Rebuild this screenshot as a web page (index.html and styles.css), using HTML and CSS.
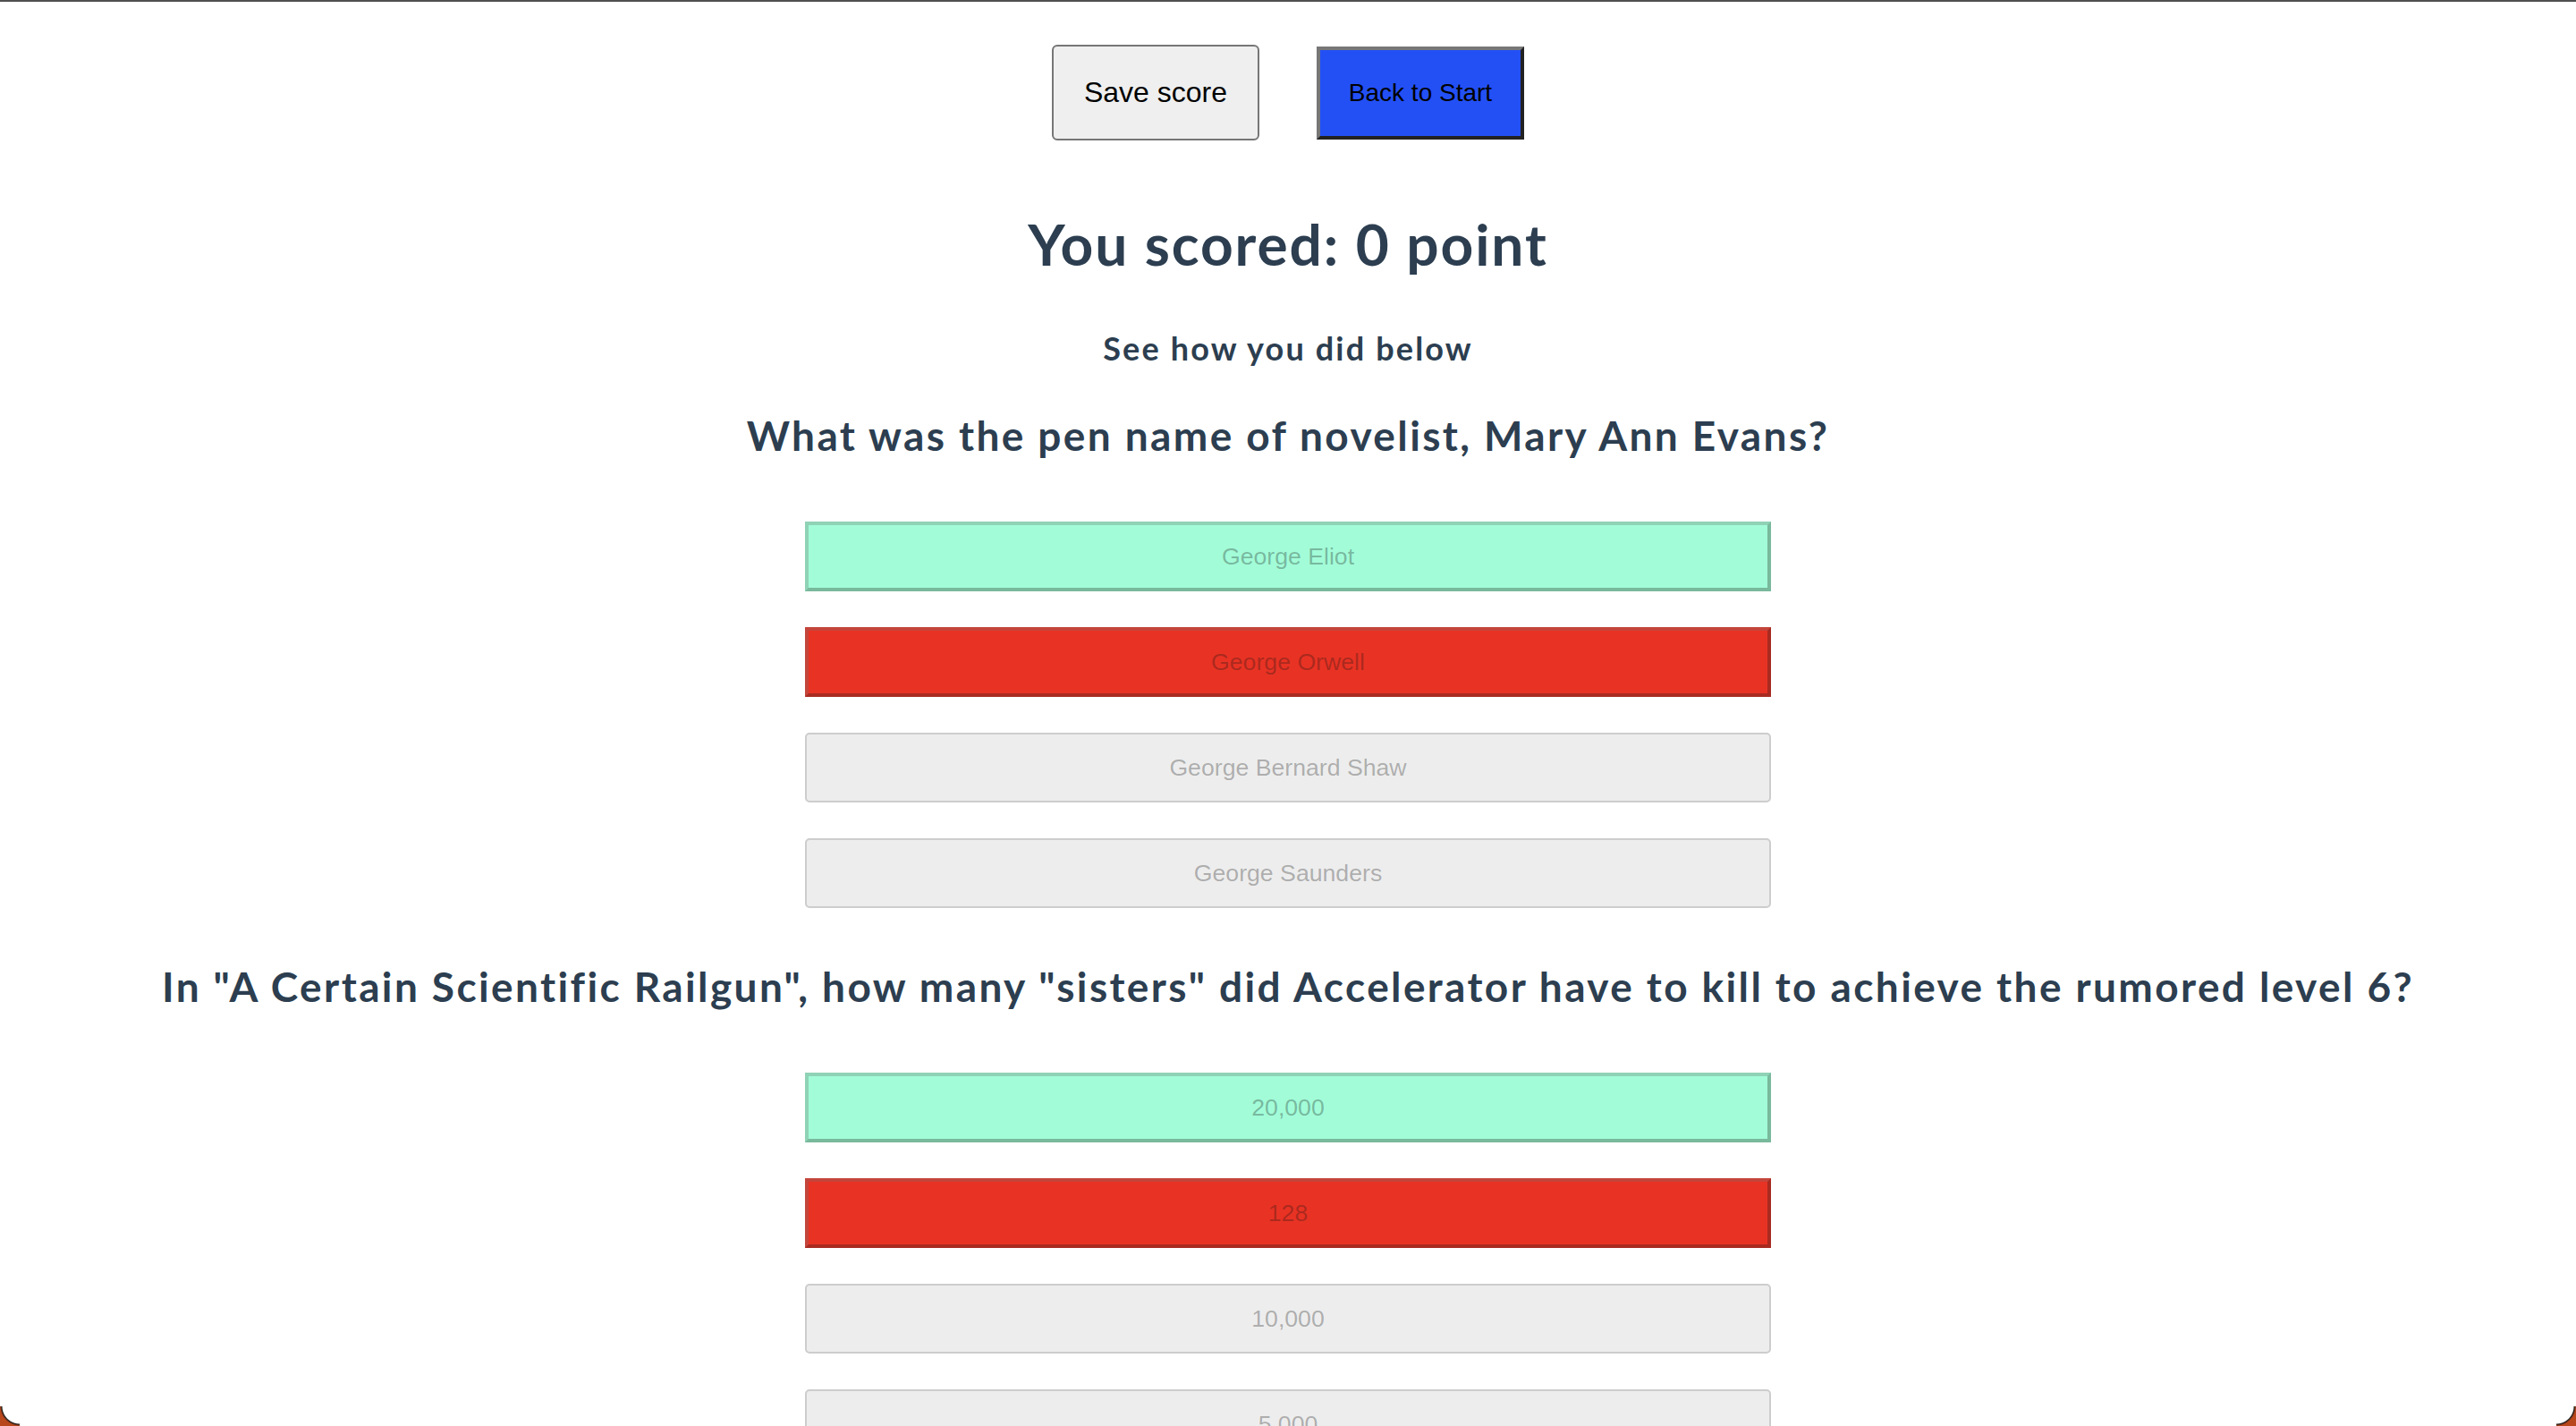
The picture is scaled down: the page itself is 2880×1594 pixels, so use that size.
FILE: index.html
```html
<!DOCTYPE html>
<html lang="en">
<head>
<meta charset="utf-8">
<title>Quiz results</title>
<link rel="stylesheet" href="styles.css">
</head>
<body>
<div class="window-line"></div>
<main class="app">
  <div class="actions">
    <button class="btn-save" type="button">Save score</button>
    <button class="btn-back" type="button">Back to Start</button>
  </div>
  <h1 class="score">You scored: 0 point</h1>
  <h3 class="subtitle">See how you did below</h3>

  <section class="question first">
    <h2 class="q-title">What was the pen name of novelist, Mary Ann Evans?</h2>
    <div class="answers">
      <button class="answer correct" disabled>George Eliot</button>
      <button class="answer wrong" disabled>George Orwell</button>
      <button class="answer" disabled>George Bernard Shaw</button>
      <button class="answer" disabled>George Saunders</button>
    </div>
  </section>

  <section class="question">
    <h2 class="q-title">In "A Certain Scientific Railgun", how many "sisters" did Accelerator have to kill to achieve the rumored level 6?</h2>
    <div class="answers">
      <button class="answer correct" disabled>20,000</button>
      <button class="answer wrong" disabled>128</button>
      <button class="answer" disabled>10,000</button>
      <button class="answer" disabled>5,000</button>
    </div>
  </section>
</main>
<div class="corner corner-left"></div>
<div class="corner corner-right"></div>
</body>
</html>
```

FILE: styles.css
```css
html, body {
  margin: 0;
  padding: 0;
  background: #ffffff;
}

.window-line {
  height: 2px;
  background: #4f4f4f;
}

.app {
  font-family: Lato, "Noto Sans", Helvetica, Arial, sans-serif;
  color: #2c3e50;
  text-align: center;
  display: flex;
  flex-direction: column;
  align-items: center;
  padding-bottom: 200px;
}

.actions {
  display: flex;
  align-items: center;
  gap: 64px;
  margin-top: 48px;
}

.btn-save {
  box-sizing: border-box;
  width: 232px;
  height: 107px;
  font-family: "Liberation Sans", Arial, sans-serif;
  font-size: 32px;
  color: #000;
  background: #efefef;
  border: 2px solid #767676;
  border-radius: 6px;
  padding: 0;
}

.btn-back {
  box-sizing: border-box;
  width: 232px;
  height: 104px;
  font-family: "Liberation Sans", Arial, sans-serif;
  font-size: 28px;
  color: #000;
  background: #2350f5;
  border-style: solid;
  border-width: 4px;
  border-color: #777777 #222222 #222222 #777777;
  padding: 0;
}

.score {
  font-size: 64px;
  line-height: 1.2;
  font-weight: 700;
  letter-spacing: 0.03em;
  margin: 78px 0 0;
}

.subtitle {
  font-size: 36px;
  line-height: 1.2;
  font-weight: 700;
  letter-spacing: 0.06em;
  margin: 56px 0 0;
}

.question {
  display: flex;
  flex-direction: column;
  align-items: center;
  margin-top: 60px;
}

.question.first {
  margin-top: 48px;
}

.q-title {
  font-size: 46px;
  line-height: 1.2;
  font-weight: 700;
  letter-spacing: 0.052em;
  margin: 0;
}

.answers {
  display: flex;
  flex-direction: column;
  gap: 40px;
  margin-top: 69px;
}

.answer {
  box-sizing: border-box;
  width: 1080px;
  height: 78px;
  font-family: "Liberation Sans", Arial, sans-serif;
  font-size: 26.67px;
  color: rgba(16, 16, 16, 0.3);
  background: #ededed;
  border: 2px solid #cdcdcd;
  border-radius: 5px;
  padding: 0;
}

.answer.correct {
  background: #a2fcd8;
  border: 4px solid;
  border-color: #8fd2b6 #79b99c #79b99c #8fd2b6;
  border-radius: 0;
}

.answer.wrong {
  background: #e83324;
  border: 4px solid;
  border-color: #c4453b #a82b21 #a82b21 #c4453b;
  border-radius: 0;
}

.corner {
  position: fixed;
  bottom: 0;
  width: 22px;
  height: 22px;
}

.corner-left {
  left: 0;
  background: radial-gradient(circle at 100% 0, transparent 19px, #1d1d1d 20px, #b8471b 22px);
}

.corner-right {
  right: 0;
  background: radial-gradient(circle at 0 0, transparent 19px, #1d1d1d 20px, #b8471b 22px);
}
```
